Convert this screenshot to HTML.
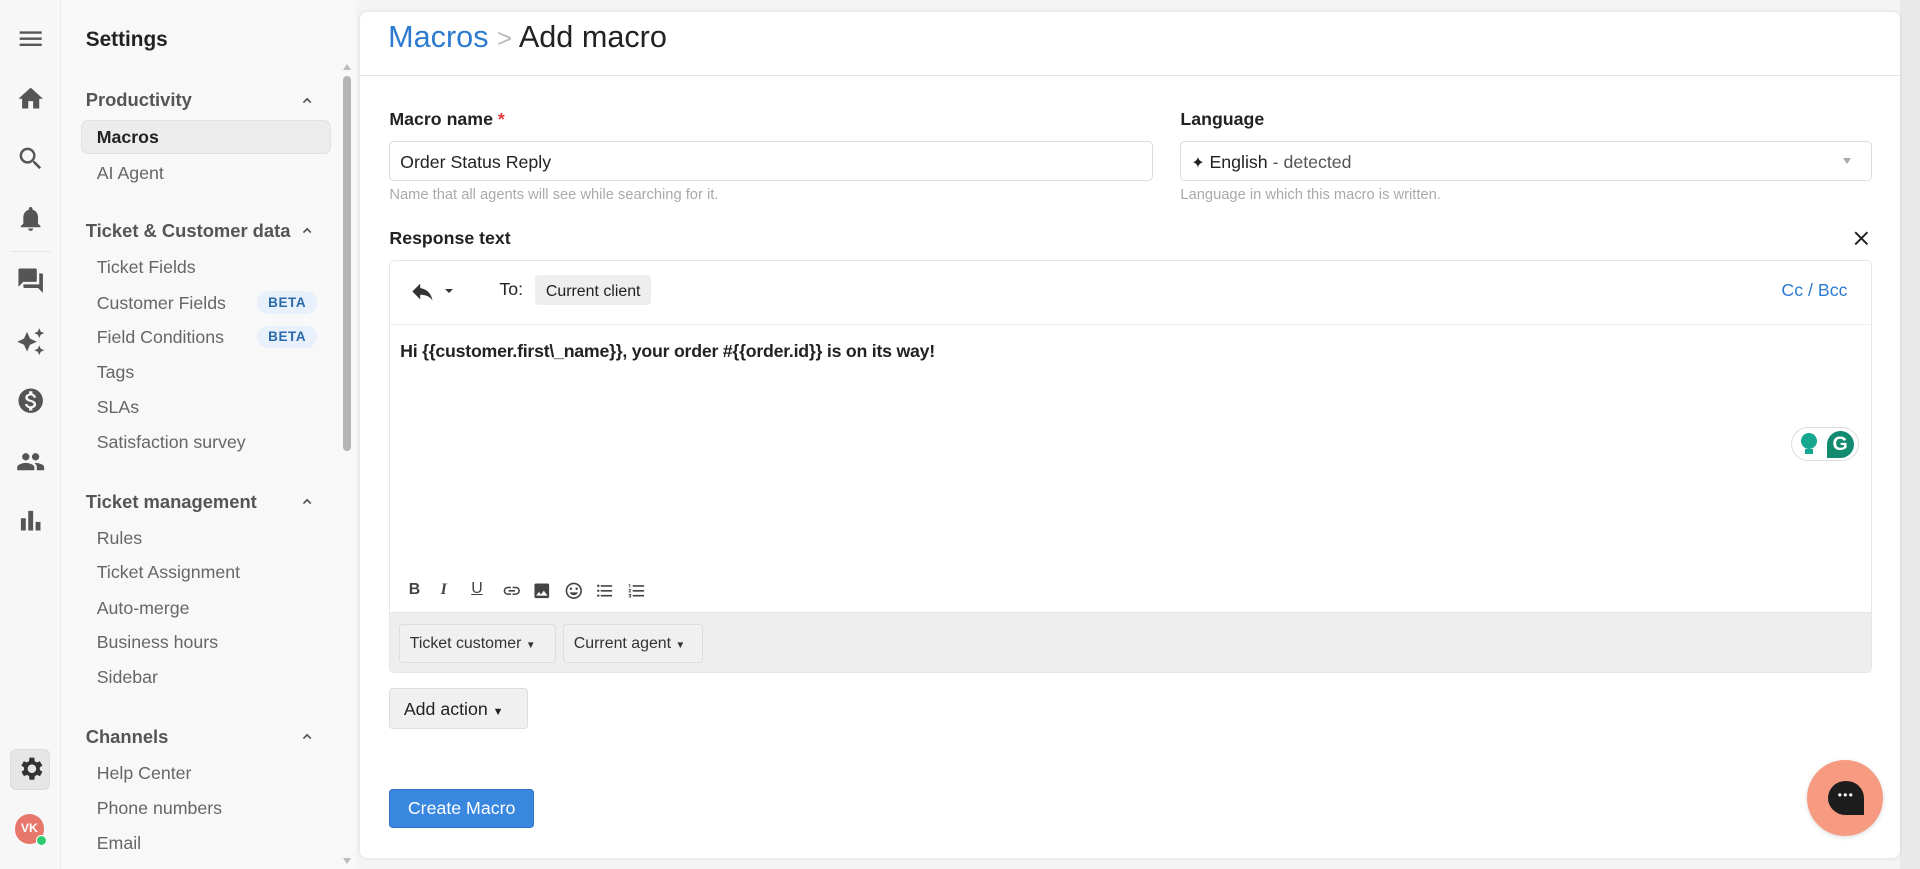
<!DOCTYPE html>
<html><head><meta charset="utf-8"><style>
*{box-sizing:border-box;margin:0;padding:0}
html,body{width:1920px;height:869px;overflow:hidden;background:#f4f4f4}
#root{zoom:1.22449;width:1568px;height:710px;position:relative;font-family:"Liberation Sans",Arial,sans-serif;color:#222}
.abs{position:absolute}
.rail{left:0;top:0;width:50px;height:710px;background:#f7f7f7;border-right:1px solid #ececec}
.rail svg{position:absolute;left:13px;width:24px;height:24px;fill:#555}
.set{left:50px;top:0;width:241px;height:710px;background:#f8f8f8}
.set .h{position:absolute;left:20px;font-size:15px;font-weight:bold;color:#555}
.set .i{position:absolute;left:29px;font-size:14.5px;color:#666}
.car{position:absolute;left:196px;width:10px;height:10px}
.beta{position:absolute;left:160px;font-size:11px;font-weight:bold;color:#2a6aa8;background:#e8f1fb;border-radius:9px;padding:3px 9px;letter-spacing:.5px}
.card{left:294px;top:10px;width:1258px;height:691px;background:#fff;border-radius:6px;box-shadow:0 0 3px rgba(0,0,0,.12)}
.lbl{font-size:14.5px;font-weight:bold;color:#222}
.inp{border:1px solid #ddd;border-radius:4px;height:33px;font-size:14.5px;padding:8px 8px;color:#222}
.hint{font-size:12px;color:#aaa}
.btn{background:#f0f0f0;border:1px solid #ddd;border-radius:3px;font-size:13.5px;color:#333}
.tb{position:absolute;top:262px;width:16px;height:16px;fill:#444}
</style></head><body><div id="root">
<div class="abs rail">
<svg style="top:20px" viewBox="0 0 24 24"><path d="M3 6h18v2H3zM3 11h18v2H3zM3 16h18v2H3z"/></svg>
<svg style="top:69px" viewBox="0 0 24 24"><path d="M10 20v-6h4v6h5v-8h3L12 3 2 12h3v8z"/></svg>
<svg style="top:118px" viewBox="0 0 24 24"><path d="M15.5 14h-.8l-.3-.3A6.5 6.5 0 1 0 9.5 16a6.5 6.5 0 0 0 4.2-1.6l.3.3v.8l5 5 1.5-1.5-5-5zm-6 0a4.5 4.5 0 1 1 0-9 4.5 4.5 0 0 1 0 9z"/></svg>
<svg style="top:167px" viewBox="0 0 24 24"><path d="M12 22a2 2 0 0 0 2-2h-4a2 2 0 0 0 2 2zm6-6V11c0-3.1-1.6-5.6-4.5-6.3V4a1.5 1.5 0 0 0-3 0v.7C7.6 5.4 6 7.9 6 11v5l-2 2v1h16v-1z"/></svg>
<div class="abs" style="left:8px;top:205px;width:34px;border-top:1px solid #e4e4e4"></div>
<svg style="top:217px" viewBox="0 0 24 24"><path d="M21 6h-2v9H6v2a1 1 0 0 0 1 1h11l4 4V7a1 1 0 0 0-1-1zm-4 6V3a1 1 0 0 0-1-1H3a1 1 0 0 0-1 1v14l4-4h10a1 1 0 0 0 1-1z"/></svg>
<svg style="top:267px" viewBox="0 0 24 24"><path d="M19 9l1.2-2.8L23 5l-2.8-1.2L19 1l-1.2 2.8L15 5l2.8 1.2zm-7.5.5L9 4 6.5 9.5 1 12l5.5 2.5L9 20l2.5-5.5L17 12zM19 15l-1.2 2.8L15 19l2.8 1.2L19 23l1.2-2.8L23 19l-2.8-1.2z"/></svg>
<svg style="top:315px" viewBox="0 0 24 24"><path d="M12 2a10 10 0 1 0 0 20 10 10 0 0 0 0-20zm1.4 16.1V20h-2.7v-1.9c-1.7-.4-3.2-1.5-3.3-3.4h2c.1 1 .8 1.8 2.6 1.8 1.9 0 2.3-1 2.3-1.5 0-.8-.4-1.5-2.6-2-2.4-.6-4.1-1.6-4.1-3.6 0-1.7 1.4-2.8 3.1-3.2V4.3h2.7v1.9c1.9.5 2.8 1.9 2.9 3.4h-2c-.1-1.1-.6-1.8-2.2-1.8-1.5 0-2.4.7-2.4 1.6 0 .8.7 1.4 2.6 1.9s4.1 1.4 4.1 3.8c0 1.8-1.3 2.7-3 3z"/></svg>
<svg style="top:365px" viewBox="0 0 24 24"><path d="M16 11a3 3 0 1 0 0-6 3 3 0 0 0 0 6zm-8 0a3 3 0 1 0 0-6 3 3 0 0 0 0 6zm0 2c-2.3 0-7 1.2-7 3.5V19h14v-2.5C15 14.2 10.3 13 8 13zm8 0h-1c1.2.8 2 2 2 3.5V19h6v-2.5c0-2.3-4.7-3.5-7-3.5z"/></svg>
<svg style="top:413px" viewBox="0 0 24 24"><path d="M4 10h4v10H4zM10 4h4v16h-4zM16 13h4v7h-4z"/></svg>
<div class="abs" style="left:8px;top:612px;width:33px;height:33px;background:#e6e6e6;border:1px solid #ddd;border-radius:5px"></div>
<svg style="top:616px;left:13px" viewBox="0 0 24 24"><path fill="#333" d="M19.4 13a7.5 7.5 0 0 0 0-2l2.1-1.6-2-3.5-2.5 1a7 7 0 0 0-1.7-1L15 3h-4l-.4 2.9a7 7 0 0 0-1.7 1l-2.5-1-2 3.5L6.6 11a7.5 7.5 0 0 0 0 2l-2.1 1.6 2 3.5 2.5-1a7 7 0 0 0 1.7 1L11 21h4l.4-2.9a7 7 0 0 0 1.7-1l2.5 1 2-3.5zM13 15.5a3.5 3.5 0 1 1 0-7 3.5 3.5 0 0 1 0 7z"/></svg>
<div class="abs" style="left:12px;top:665px;width:24px;height:24px;border-radius:50%;background:#e8776b;color:#fff;font-size:10px;font-weight:bold;text-align:center;line-height:24px">VK</div>
<div class="abs" style="left:29px;top:682px;width:9px;height:9px;border-radius:50%;background:#2ecc71;border:1.5px solid #fff"></div>
</div>
<div class="abs set">
<div class="abs" style="left:20px;top:23px;font-size:17px;font-weight:bold;color:#222">Settings</div>
<div class="abs" style="left:230px;top:52px;width:0;height:0;border-left:4px solid transparent;border-right:4px solid transparent;border-bottom:5px solid #bbb"></div>
<div class="abs" style="left:230px;top:62px;width:7px;height:306px;background:#b5b5b5;border-radius:4px"></div>
<div class="abs" style="left:230px;top:701px;width:0;height:0;border-left:4px solid transparent;border-right:4px solid transparent;border-top:5px solid #bbb"></div>
<div class="h" style="top:73px">Productivity</div><svg class="car" style="top:77px" viewBox="0 0 10 10"><path d="M2 7l3-3 3 3" stroke="#555" stroke-width="1.4" fill="none"/></svg>
<div class="abs" style="left:16px;top:98px;width:204px;height:28px;background:#ececec;border:1px solid #e2e2e2;border-radius:6px"></div>
<div class="i" style="top:104px;color:#222;font-weight:bold">Macros</div>
<div class="i" style="top:133px">AI Agent</div>
<div class="h" style="top:180px">Ticket &amp; Customer data</div><svg class="car" style="top:183px" viewBox="0 0 10 10"><path d="M2 7l3-3 3 3" stroke="#555" stroke-width="1.4" fill="none"/></svg>
<div class="i" style="top:210px">Ticket Fields</div>
<div class="i" style="top:239px">Customer Fields</div><div class="beta" style="top:238px">BETA</div>
<div class="i" style="top:267px">Field Conditions</div><div class="beta" style="top:266px">BETA</div>
<div class="i" style="top:296px">Tags</div>
<div class="i" style="top:324px">SLAs</div>
<div class="i" style="top:353px">Satisfaction survey</div>
<div class="h" style="top:401px">Ticket management</div><svg class="car" style="top:404px" viewBox="0 0 10 10"><path d="M2 7l3-3 3 3" stroke="#555" stroke-width="1.4" fill="none"/></svg>
<div class="i" style="top:431px">Rules</div>
<div class="i" style="top:459px">Ticket Assignment</div>
<div class="i" style="top:488px">Auto-merge</div>
<div class="i" style="top:516px">Business hours</div>
<div class="i" style="top:545px">Sidebar</div>
<div class="h" style="top:593px">Channels</div><svg class="car" style="top:596px" viewBox="0 0 10 10"><path d="M2 7l3-3 3 3" stroke="#555" stroke-width="1.4" fill="none"/></svg>
<div class="i" style="top:623px">Help Center</div>
<div class="i" style="top:652px">Phone numbers</div>
<div class="i" style="top:680px">Email</div>
</div>
<div class="abs" style="left:1552px;top:0;width:16px;height:710px;background:#e9e9e9"></div>
<div class="abs card">
<div class="abs" style="left:23px;top:6px;font-size:25px;color:#222;white-space:nowrap"><span style="color:#2d7bd0">Macros</span> <span style="color:#bbb;font-size:21px">&gt;</span> Add macro</div>
<div class="abs" style="left:0;top:51px;width:1258px;border-top:1px solid #e6e6e6"></div>
<div class="abs lbl" style="left:24px;top:79px">Macro name <span style="color:#e03b3b">*</span></div>
<div class="abs inp" style="left:24px;top:105px;width:624px">Order Status Reply</div>
<div class="abs hint" style="left:24px;top:143px">Name that all agents will see while searching for it.</div>
<div class="abs lbl" style="left:670px;top:79px">Language</div>
<div class="abs inp" style="left:670px;top:105px;width:565px"><b style="font-weight:normal;font-size:13px">&#10022;</b> English <span style="color:#555">- detected</span></div>
<div class="abs" style="left:1211px;top:119px;border-left:4px solid transparent;border-right:4px solid transparent;border-top:5px solid #aaa"></div>
<div class="abs hint" style="left:670px;top:143px">Language in which this macro is written.</div>
<div class="abs lbl" style="left:24px;top:176px">Response text</div>
<svg class="abs" style="left:1220px;top:179px" width="12" height="12" viewBox="0 0 12 12"><path d="M1 1l10 10M11 1L1 11" stroke="#222" stroke-width="1.6"/></svg>
<div class="abs" style="left:24px;top:202px;width:1211px;height:338px;border:1px solid #e6e6e6;border-radius:4px;overflow:hidden">
 <svg class="abs" style="left:15px;top:14px" width="22" height="22" viewBox="0 0 24 24"><path fill="#333" d="M10 9V5l-7 7 7 7v-4.1c5 0 8.5 1.6 11 5.1-1-5-4-10-11-11z"/></svg>
 <div class="abs" style="left:45px;top:23px;border-left:3.5px solid transparent;border-right:3.5px solid transparent;border-top:4px solid #333"></div>
 <div class="abs" style="left:89px;top:15px;font-size:14.5px;color:#222">To:</div>
 <div class="abs" style="left:118px;top:12px;height:24px;padding:6px 9px;background:#eee;border-radius:3px;font-size:13px;color:#222">Current client</div>
 <div class="abs" style="left:1136px;top:16px;font-size:14.5px;color:#2d7bd0">Cc / Bcc</div>
 <div class="abs" style="left:0;top:52px;width:1211px;border-top:1px solid #eee"></div>
 <div class="abs" style="left:8px;top:66px;font-size:14.5px;font-weight:bold;color:#222;letter-spacing:-.2px">Hi {{customer.first\_name}}, your order #{{order.id}} is on its way!</div>
 <div class="abs" style="left:1144px;top:136px;width:55px;height:28px;border:1px solid #ddd;border-radius:14px;background:#fff"></div>
 <div class="abs" style="left:1152px;top:141px;width:13px;height:13px;border-radius:50%;background:#15a88f"></div>
 <div class="abs" style="left:1155px;top:154px;width:7px;height:4px;background:#15a88f"></div>
 <div class="abs" style="left:1173px;top:139px;width:22px;height:22px;border-radius:50% 50% 50% 0;background:#118a70;color:#fff;font-weight:bold;font-size:16px;text-align:center;line-height:22px">G</div>
 <div class="abs" style="left:15px;top:262px;font-size:13px;font-weight:bold;color:#444">B</div>
 <div class="abs" style="left:41px;top:262px;font-size:13px;font-weight:bold;font-style:italic;font-family:'Liberation Serif';color:#444">I</div>
 <div class="abs" style="left:66px;top:261px;font-size:13px;text-decoration:underline;color:#444">U</div>
 <svg class="tb" style="left:91px" viewBox="0 0 24 24"><path d="M3.9 12c0-1.7 1.4-3.1 3.1-3.1h4V7H7a5 5 0 0 0 0 10h4v-1.9H7c-1.7 0-3.1-1.4-3.1-3.1zM8 13h8v-2H8zm9-6h-4v1.9h4c1.7 0 3.1 1.4 3.1 3.1s-1.4 3.1-3.1 3.1h-4V17h4a5 5 0 0 0 0-10z"/></svg>
 <svg class="tb" style="left:116px" viewBox="0 0 24 24"><path d="M21 19V5a2 2 0 0 0-2-2H5a2 2 0 0 0-2 2v14a2 2 0 0 0 2 2h14a2 2 0 0 0 2-2zM8.5 13.5l2.5 3 3.5-4.5 4.5 6H5z"/></svg>
 <svg class="tb" style="left:142px" viewBox="0 0 24 24"><path d="M12 2a10 10 0 1 0 0 20 10 10 0 0 0 0-20zm0 18a8 8 0 1 1 0-16 8 8 0 0 1 0 16zm3.5-9a1.5 1.5 0 1 0 0-3 1.5 1.5 0 0 0 0 3zm-7 0a1.5 1.5 0 1 0 0-3 1.5 1.5 0 0 0 0 3zm3.5 6.5c2.3 0 4.3-1.5 5.1-3.5H6.9c.8 2 2.8 3.5 5.1 3.5z"/></svg>
 <svg class="tb" style="left:167px" viewBox="0 0 24 24"><path d="M4 10.5a1.5 1.5 0 1 0 0 3 1.5 1.5 0 0 0 0-3zm0-6a1.5 1.5 0 1 0 0 3 1.5 1.5 0 0 0 0-3zm0 12a1.5 1.5 0 1 0 0 3 1.5 1.5 0 0 0 0-3zM7 19h14v-2H7zm0-6h14v-2H7zm0-8v2h14V5z"/></svg>
 <svg class="tb" style="left:193px" viewBox="0 0 24 24"><path d="M2 17h2v.5H3v1h1v.5H2v1h3v-4H2zm1-9h1V4H2v1h1zm-1 3h1.8L2 13.1v.9h3v-1H3.2L5 10.9V10H2zm5-6v2h14V5zm0 14h14v-2H7zm0-6h14v-2H7z"/></svg>
 <div class="abs" style="left:0;top:287px;width:1211px;height:51px;background:#eeeeee;border-top:1px solid #e6e6e6"></div>
 <div class="abs btn" style="left:7px;top:297px;width:128px;height:32px;padding:8px 8px;font-size:13px">Ticket customer <span style="font-size:8px">&#9660;</span></div>
 <div class="abs btn" style="left:141px;top:297px;width:114px;height:32px;padding:8px 8px;font-size:13px">Current agent <span style="font-size:8px">&#9660;</span></div>
</div>
<div class="abs btn" style="left:24px;top:552px;width:113px;height:33px;padding:8px 11px;font-size:14.5px;color:#222">Add action <span style="font-size:9px">&#9660;</span></div>
<div class="abs" style="left:24px;top:634px;width:118px;height:32px;background:#3a87e0;border:1px solid #2f74c4;border-radius:3px;color:#fff;font-size:14.5px;text-align:center;line-height:30px">Create Macro</div>
<div class="abs" style="left:1182px;top:611px;width:62px;height:62px;border-radius:50%;background:#f79a82;box-shadow:0 1px 4px rgba(0,0,0,.15)"></div>
<div class="abs" style="left:1199px;top:628px;width:29px;height:28px;border-radius:50% 50% 0 50%;background:#1d1d1d;color:#fff;font-size:10px;text-align:center;line-height:24px;letter-spacing:1px">•••</div>
</div>
</div></body></html>
